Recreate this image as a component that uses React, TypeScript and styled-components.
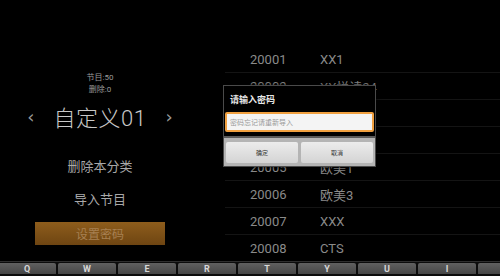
import React from "react";
import styled, { createGlobalStyle } from "styled-components";

const GlobalStyle = createGlobalStyle`
  html, body {
    margin: 0;
    padding: 0;
    background: #000;
  }
  body {
    font-family: "Roboto", "Noto Sans CJK SC", sans-serif;
  }
`;

const Screen = styled.div`
  position: relative;
  width: 500px;
  height: 276px;
  overflow: hidden;
  background: #000;
  display: flex;
  flex-direction: column;
`;

const Content = styled.div`
  height: 261px;
  display: grid;
  grid-template-columns: 200px 1fr;
`;

const LeftPanel = styled.div`
  display: flex;
  flex-direction: column;
  align-items: center;
  padding-top: 72px;
`;

const Counter = styled.div`
  font-size: 8px;
  line-height: 12px;
  color: #9a9a9a;
`;

const TitleRow = styled.div`
  display: flex;
  align-items: center;
  gap: 19px;
  margin-top: 4px;
  height: 32px;
`;

const Arrow = styled.span`
  font-size: 18px;
  color: #999;
  font-family: "DejaVu Sans", sans-serif;
`;

const Title = styled.div`
  font-size: 22px;
  color: #c8c8c8;
  font-weight: 300;
  letter-spacing: 0.5px;
`;

const MenuItem = styled.div<{ $top: number }>`
  margin-top: ${(p) => p.$top}px;
  font-size: 13px;
  line-height: 16px;
  color: #a8a8a8;
`;

const PasswordButton = styled.div`
  margin-top: 14px;
  width: 130px;
  height: 23px;
  display: flex;
  align-items: center;
  justify-content: center;
  background: linear-gradient(#8e5d1c, #6e4512);
  color: #a78052;
  font-size: 12px;
`;

const List = styled.div`
  padding-top: 46px;
  display: flex;
  flex-direction: column;
`;

const Row = styled.div`
  height: 27px;
  flex: 0 0 27px;
  display: grid;
  grid-template-columns: 70px 1fr;
  align-items: center;
  padding-left: 25px;
  margin-left: 25px;
  border-bottom: 1px solid #141414;
  box-sizing: border-box;
  font-size: 13px;
  color: #8a8a8a;
`;

const Dialog = styled.div`
  position: absolute;
  left: 223px;
  top: 85px;
  width: 153px;
  height: 82px;
  background: #000;
  border: 1px solid #4a4a4a;
  box-sizing: border-box;
  display: flex;
  flex-direction: column;
  box-shadow: 0 0 4px rgba(0, 0, 0, 0.8);
`;

const DialogTitle = styled.div`
  height: 26px;
  display: flex;
  align-items: center;
  padding-left: 6px;
  font-size: 9px;
  color: #e8e8e8;
  font-weight: bold;
`;

const InputWrap = styled.div`
  padding: 0 1px;
  background: #000;
`;

const Input = styled.div`
  height: 20px;
  border: 2px solid #f0a040;
  border-radius: 2px;
  background: #f4f4f4;
  box-sizing: border-box;
  display: flex;
  align-items: center;
  padding-left: 3px;
  font-size: 7px;
  color: #9a9a9a;
`;

const ButtonBar = styled.div`
  flex: 1;
  margin-top: 4px;
  background: #b4b4b4;
  border-top: 2px solid #5a5a5a;
  display: grid;
  grid-template-columns: 1fr 1fr;
  gap: 3px;
  padding: 4px 2px 3px;
`;

const DialogButton = styled.div`
  background: linear-gradient(#ececec, #d4d4d4);
  border-radius: 2px;
  display: flex;
  align-items: center;
  justify-content: center;
  font-size: 6px;
  color: #333;
`;

const Keyboard = styled.div`
  flex: 1;
  background: #0c0c0c;
  border-top: 1px solid #2e2e2e;
  display: flex;
  flex-direction: column;
  gap: 2px;
  padding-top: 1px;
  margin-left: -2px;
`;

const KeyRow = styled.div<{ $shift?: number }>`
  display: flex;
  gap: 2px;
  margin-left: ${(p) => p.$shift ?? 0}px;
`;

const Key = styled.div<{ $h?: number }>`
  flex: 0 0 58px;
  height: ${(p) => p.$h ?? 11}px;
  background: linear-gradient(#606060, #464646);
  border-radius: 2px 2px 0 0;
  display: flex;
  align-items: center;
  justify-content: center;
  font-size: 9px;
  font-weight: bold;
  color: #d8d8d8;
  line-height: 10px;
`;

const rows: [string, string][] = [
  ["20001", "XX1"],
  ["20002", "XX悦读24"],
  ["20003", "XX"],
  ["20004", ""],
  ["20005", "欧美1"],
  ["20006", "欧美3"],
  ["20007", "XXX"],
  ["20008", "CTS"],
];

// the last key (O) runs off the right edge, so its letter is not shown
const keys = ["Q", "W", "E", "R", "T", "Y", "U", "I", ""];
const lowerKeys = ["A", "S", "D", "F", "G", "H", "J", "K", "L"];

export default function App() {
  return (
    <Screen>
      <GlobalStyle />
      <Content>
        <LeftPanel>
          <Counter>节目:50</Counter>
          <Counter>删除:0</Counter>
          <TitleRow>
            <Arrow>‹</Arrow>
            <Title>自定义01</Title>
            <Arrow>›</Arrow>
          </TitleRow>
          <MenuItem $top={27}>删除本分类</MenuItem>
          <MenuItem $top={17}>导入节目</MenuItem>
          <PasswordButton>设置密码</PasswordButton>
        </LeftPanel>
        <List>
          {rows.map(([num, name]) => (
            <Row key={num}>
              <span>{num}</span>
              <span>{name}</span>
            </Row>
          ))}
        </List>
      </Content>
      <Keyboard>
        <KeyRow>
          {keys.map((k, i) => (
            <Key key={i}>{k}</Key>
          ))}
        </KeyRow>
        <KeyRow $shift={24}>
          {lowerKeys.map((k) => (
            <Key key={k} $h={4} aria-label={k} />
          ))}
        </KeyRow>
      </Keyboard>
      <Dialog>
        <DialogTitle>请输入密码</DialogTitle>
        <InputWrap>
          <Input>密码忘记请重新导入</Input>
        </InputWrap>
        <ButtonBar>
          <DialogButton>确定</DialogButton>
          <DialogButton>取消</DialogButton>
        </ButtonBar>
      </Dialog>
    </Screen>
  );
}
